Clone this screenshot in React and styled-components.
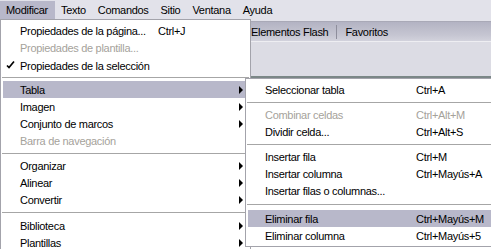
import styled, { createGlobalStyle } from "styled-components";

const GlobalStyle = createGlobalStyle`
  body {
    margin: 0;
    overflow: hidden;
    background: #fff;
  }
`;

const Screen = styled.div`
  position: relative;
  width: 491px;
  height: 249px;
  overflow: hidden;
  display: flex;
  flex-direction: column;
  font-family: "Liberation Sans", Arial, sans-serif;
  font-size: 11px;
  letter-spacing: -0.3px;
  color: #000;
`;

const MenuBar = styled.div`
  display: flex;
  height: 21px;
  padding-top: 1px;
  box-sizing: border-box;
  background: #e2e2ea;
`;

const BarItem = styled.div`
  height: 18px;
  padding: 0 ${p => p.$pad}px 0 6px;
  display: flex;
  align-items: center;
  background: ${p => (p.$open ? "#b8b8ca" : "transparent")};
`;

const Workspace = styled.div`
  flex: 1;
  display: flex;
  flex-direction: column;
`;

const TabStrip = styled.div`
  height: 19px;
  display: flex;
  align-items: center;
  gap: 8px;
  padding-left: 251px;
  border-top: 1px solid #a9a9b7;
  border-bottom: 1px solid #eeeef2;
  background: linear-gradient(#b3b3c3, #c6c6d2 70%, #d2d2dc);
`;

const TabDivider = styled.span`
  width: 1px;
  height: 14px;
  background: #8e8e9c;
`;

const ToolArea = styled.div`
  height: 34px;
  background: #dcdce4;
`;

const DarkBar = styled.div`
  height: 4px;
  background: #7b8787;
`;

const DocArea = styled.div`
  flex: 1;
  background: #fff;
`;

const Menu = styled.div`
  position: absolute;
  top: ${p => p.$top}px;
  left: ${p => p.$left}px;
  width: ${p => p.$width}px;
  padding: 2px;
  box-sizing: border-box;
  background: #fff;
  border: 1px solid #a3a3ab;
`;

const Row = styled.div`
  display: grid;
  grid-template-columns: 17px ${p => p.$label}px 1fr 14px;
  align-items: center;
  height: 17px;
  white-space: nowrap;
  background: ${p => (p.$active ? "#b8b8ca" : "transparent")};
  color: ${p => (p.$disabled ? "#a5a29b" : "#000")};
`;

const Separator = styled.div`
  height: ${p => p.$h || 8}px;
  display: flex;
  align-items: center;
  margin: 0 -1px;

  &::after {
    content: "";
    flex: 1;
    height: 1px;
    background: #a6a6a6;
  }
`;

const Arrow = styled.span`
  justify-self: center;
  width: 0;
  height: 0;
  border-left: 4px solid #000;
  border-top: 4px solid transparent;
  border-bottom: 4px solid transparent;
`;

const Check = () => (
  <svg width="17" height="17" viewBox="0 0 17 17">
    <path d="M4 9.5 L6 11.5 L11 5.5" fill="none" stroke="#000" strokeWidth="1.7" />
  </svg>
);

const modifyItems = [
  { label: "Propiedades de la página...", shortcut: "Ctrl+J" },
  { label: "Propiedades de plantilla...", disabled: true },
  { label: "Propiedades de la selección", checked: true },
  { sep: 8 },
  { label: "Tabla", sub: true, active: true },
  { label: "Imagen", sub: true },
  { label: "Conjunto de marcos", sub: true },
  { label: "Barra de navegación", disabled: true },
  { sep: 8 },
  { label: "Organizar", sub: true },
  { label: "Alinear", sub: true },
  { label: "Convertir", sub: true },
  { sep: 9 },
  { label: "Biblioteca", sub: true },
  { label: "Plantillas", sub: true },
];

const tableItems = [
  { label: "Seleccionar tabla", shortcut: "Ctrl+A" },
  { sep: 8 },
  { label: "Combinar celdas", shortcut: "Ctrl+Alt+M", disabled: true },
  { label: "Dividir celda...", shortcut: "Ctrl+Alt+S" },
  { sep: 8 },
  { label: "Insertar fila", shortcut: "Ctrl+M" },
  { label: "Insertar columna", shortcut: "Ctrl+Mayús+A" },
  { label: "Insertar filas o columnas..." },
  { sep: 11 },
  { label: "Eliminar fila", shortcut: "Ctrl+Mayús+M", active: true },
  { label: "Eliminar columna", shortcut: "Ctrl+Mayús+5" },
];

const MenuList = ({ items, labelWidth }) =>
  items.map((item, i) =>
    item.sep ? (
      <Separator key={i} $h={item.sep} />
    ) : (
      <Row key={i} $label={labelWidth} $active={item.active} $disabled={item.disabled}>
        <span>{item.checked && <Check />}</span>
        <span>{item.label}</span>
        <span>{item.shortcut}</span>
        {item.sub ? <Arrow /> : <span />}
      </Row>
    )
  );

const menuBar = [
  { label: "Modificar", open: true },
  { label: "Texto" },
  { label: "Comandos" },
  { label: "Sitio" },
  { label: "Ventana" },
  { label: "Ayuda" },
];

export default function App() {
  return (
    <Screen>
      <GlobalStyle />
      <MenuBar>
        {menuBar.map(m => (
          <BarItem key={m.label} $open={m.open} $pad={m.open ? 7 : 6}>
            {m.label}
          </BarItem>
        ))}
      </MenuBar>
      <Workspace>
        <TabStrip>
          <span>Elementos Flash</span>
          <TabDivider />
          <span>Favoritos</span>
        </TabStrip>
        <ToolArea />
        <DarkBar />
        <DocArea />
      </Workspace>

      <Menu $top={19} $left={0} $width={251}>
        <MenuList items={modifyItems} labelWidth={138} />
      </Menu>
      <Menu $top={78} $left={245} $width={260}>
        <MenuList items={tableItems} labelWidth={151} />
      </Menu>
    </Screen>
  );
}
